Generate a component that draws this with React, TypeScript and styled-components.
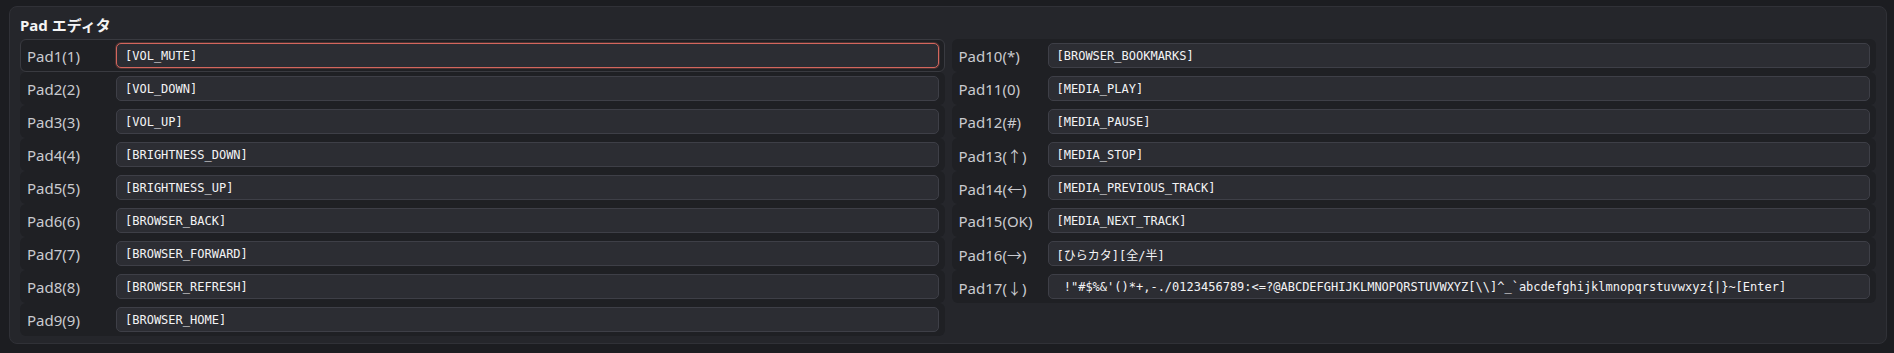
import React from 'react';
import styled, { createGlobalStyle, css } from 'styled-components';

type Pad = {
  label: string;
  value: string;
};

const leftPads: Pad[] = [
  { label: 'Pad1(1)', value: '[VOL_MUTE]' },
  { label: 'Pad2(2)', value: '[VOL_DOWN]' },
  { label: 'Pad3(3)', value: '[VOL_UP]' },
  { label: 'Pad4(4)', value: '[BRIGHTNESS_DOWN]' },
  { label: 'Pad5(5)', value: '[BRIGHTNESS_UP]' },
  { label: 'Pad6(6)', value: '[BROWSER_BACK]' },
  { label: 'Pad7(7)', value: '[BROWSER_FORWARD]' },
  { label: 'Pad8(8)', value: '[BROWSER_REFRESH]' },
  { label: 'Pad9(9)', value: '[BROWSER_HOME]' },
];

const rightPads: Pad[] = [
  { label: 'Pad10(*)', value: '[BROWSER_BOOKMARKS]' },
  { label: 'Pad11(0)', value: '[MEDIA_PLAY]' },
  { label: 'Pad12(#)', value: '[MEDIA_PAUSE]' },
  { label: 'Pad13(↑)', value: '[MEDIA_STOP]' },
  { label: 'Pad14(←)', value: '[MEDIA_PREVIOUS_TRACK]' },
  { label: 'Pad15(OK)', value: '[MEDIA_NEXT_TRACK]' },
  { label: 'Pad16(→)', value: '[ひらカタ][全/半]' },
  {
    label: 'Pad17(↓)',
    value: ' !"#$%&\'()*+,-./0123456789:<=?@ABCDEFGHIJKLMNOPQRSTUVWXYZ[\\\\]^_`abcdefghijklmnopqrstuvwxyz{|}~[Enter]',
  },
];

const GlobalStyle = createGlobalStyle`
  html, body {
    margin: 0;
    background: #1c1d21;
  }
  body {
    padding: 6px 7px 0 9px;
    font-family: 'Noto Sans', 'Noto Sans CJK JP', sans-serif;
  }
`;

const Panel = styled.section`
  background: #25262b;
  border: 1px solid #303137;
  border-radius: 8px;
  padding: 8px 10px 7px 10px;
`;

const Title = styled.h2`
  margin: 0 0 4px 0;
  font-size: 15px;
  line-height: 20px;
  font-weight: 700;
  color: #f4f4f5;
  font-family: 'Noto Sans', 'Noto Sans CJK JP', sans-serif;
`;

const Columns = styled.div`
  display: grid;
  grid-template-columns: 1fr 1fr;
  column-gap: 7px;
  align-items: start;
`;

const Column = styled.div`
  display: flex;
  flex-direction: column;
`;

const Row = styled.div<{ $active?: boolean }>`
  display: flex;
  align-items: center;
  height: 33px;
  box-sizing: border-box;
  padding: 3px 5px 3px 6px;
  background: #1f2024;
  border: 1px solid transparent;
  border-radius: 6px;

  ${(p) =>
    p.$active &&
    css`
      border-color: #393a40;
    `}
`;

const Label = styled.span`
  width: 89px;
  flex-shrink: 0;
  padding-top: 1px;
  font-size: 15px;
  color: #c9cacf;
  white-space: nowrap;
  font-family: 'Noto Sans', 'Noto Sans CJK JP', sans-serif;
`;

const KeyInput = styled.input<{ $active?: boolean }>`
  flex: 1;
  min-width: 0;
  height: 25px;
  box-sizing: border-box;
  padding: 1px 8px 0 8px;
  background: #2c2d33;
  border: 1px solid #3e3f47;
  border-radius: 5px;
  color: #f3f3f5;
  font-size: 12px;
  font-family: 'DejaVu Sans Mono', 'Noto Sans CJK JP', monospace;
  outline: none;

  ${(p) =>
    p.$active &&
    css`
      border-color: #d4665d;
      box-shadow: 0 0 0 1px rgba(212, 102, 93, 0.25);
    `}
`;

const PadRow: React.FC<{ pad: Pad; active?: boolean }> = ({ pad, active }) => (
  <Row $active={active}>
    <Label>{pad.label}</Label>
    <KeyInput $active={active} type="text" defaultValue={pad.value} spellCheck={false} />
  </Row>
);

const App: React.FC = () => {
  return (
    <>
      <GlobalStyle />
      <Panel>
        <Title>Pad エディタ</Title>
        <Columns>
          <Column>
            {leftPads.map((pad, i) => (
              <PadRow key={pad.label} pad={pad} active={i === 0} />
            ))}
          </Column>
          <Column>
            {rightPads.map((pad) => (
              <PadRow key={pad.label} pad={pad} />
            ))}
          </Column>
        </Columns>
      </Panel>
    </>
  );
};

export default App;
